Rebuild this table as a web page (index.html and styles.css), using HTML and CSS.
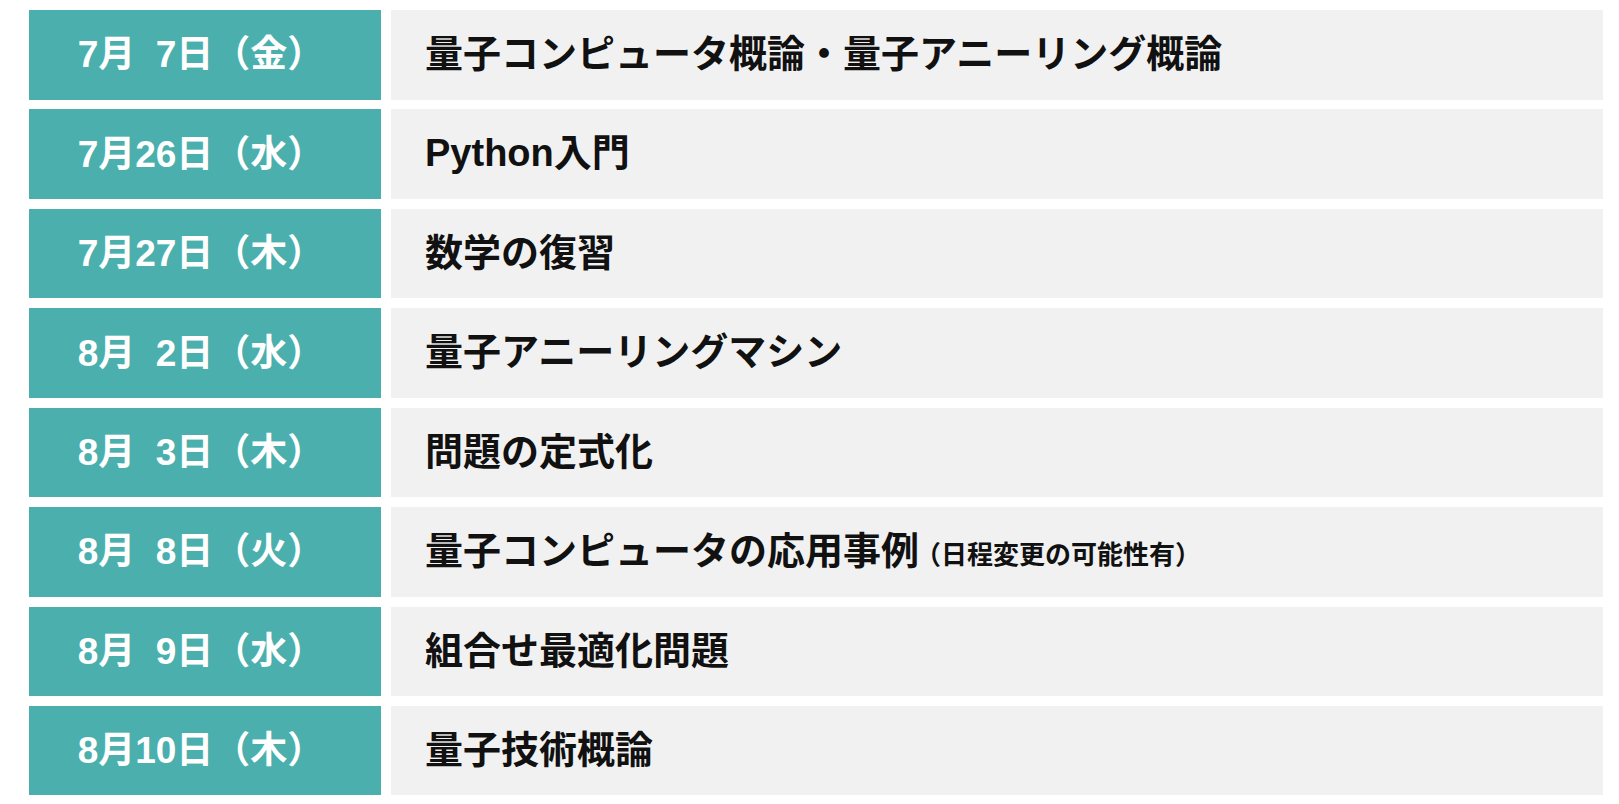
FILE: index.html
```html
<!DOCTYPE html>
<html lang="ja">
<head>
<meta charset="utf-8">
<title>日程</title>
<link rel="stylesheet" href="styles.css">
</head>
<body>
<div class="schedule">
  <div class="row"><div class="date">7月<span class="day">7</span>日（金）</div><div class="topic">量子コンピュータ概論・量子アニーリング概論</div></div>
  <div class="row"><div class="date">7月<span class="day">26</span>日（水）</div><div class="topic">Python入門</div></div>
  <div class="row"><div class="date">7月<span class="day">27</span>日（木）</div><div class="topic">数学の復習</div></div>
  <div class="row"><div class="date">8月<span class="day">2</span>日（水）</div><div class="topic">量子アニーリングマシン</div></div>
  <div class="row"><div class="date">8月<span class="day">3</span>日（木）</div><div class="topic">問題の定式化</div></div>
  <div class="row"><div class="date">8月<span class="day">8</span>日（火）</div><div class="topic">量子コンピュータの応用事例<span class="note">（日程変更の可能性有）</span></div></div>
  <div class="row"><div class="date">8月<span class="day">9</span>日（水）</div><div class="topic">組合せ最適化問題</div></div>
  <div class="row"><div class="date">8月<span class="day">10</span>日（木）</div><div class="topic">量子技術概論</div></div>
</div>
</body>
</html>
```
FILE: styles.css
```css
html, body {
  margin: 0;
  padding: 0;
  background: #ffffff;
}

body {
  font-family: "Liberation Sans", "Noto Sans CJK JP", sans-serif;
  font-weight: 700;
}

.schedule {
  display: flex;
  flex-direction: column;
  gap: 9.93px;
  padding: 10px 0 0 29px;
  width: 1574px;
}

.row {
  display: grid;
  grid-template-columns: 352px 1212px;
  column-gap: 10px;
  height: 89.5px;
}

.date {
  background: #4aafad;
  color: #ffffff;
  font-size: 37px;
  display: flex;
  align-items: center;
  justify-content: center;
  padding-right: 8px;
  white-space: nowrap;
  line-height: 1;
}

.day {
  display: inline-block;
  width: 2ch;
  text-align: right;
}

.topic {
  background: #f1f1f1;
  color: #111111;
  font-size: 38px;
  display: flex;
  align-items: baseline;
  padding-left: 34px;
  padding-top: 22px;
  box-sizing: border-box;
  line-height: 1.2;
  white-space: nowrap;
}

.note {
  font-size: 26px;
  margin-left: -4px;
}
```
